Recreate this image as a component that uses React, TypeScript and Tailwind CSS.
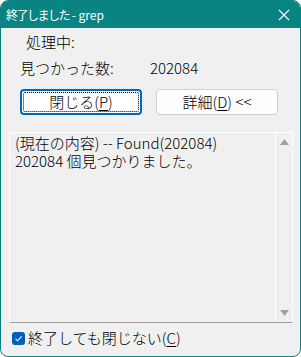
import React from "react";

const font = { fontFamily: '"Noto Sans CJK JP", "Noto Sans", sans-serif' };

export default function App() {
  return (
    <div className="w-[301px] h-[357px] bg-white">
      <div
        className="w-[301px] h-[357px] rounded-[8px] border border-[#0a8383] bg-[#f0f0f0] overflow-hidden flex flex-col text-black"
        style={font}
      >
        <div className="h-[27px] shrink-0 bg-[#0a8383] flex items-center justify-between pl-[5px] pr-[10px] text-white text-[12px] leading-none">
          <span className="whitespace-pre">
            <span className="tracking-[-1.5px]">終了しました</span>
            <span> - grep</span>
          </span>
          <svg width="12" height="12" viewBox="0 0 12 12" className="mt-[1px]">
            <path d="M1 1 L11 11 M11 1 L1 11" stroke="white" strokeWidth="1.1" />
          </svg>
        </div>
        <div className="flex-1 flex flex-col text-[15px] leading-[20px] font-light">
          <div className="mt-[4px] pl-[25px] h-[20px]">処理中:</div>
          <div className="mt-[6px] pl-[19px] h-[20px] flex">
            <span className="w-[130px]">見つかった数:</span>
            <span>202084</span>
          </div>
          <div className="mt-[11px] pl-[19px] flex gap-[14px]">
            <div className="relative w-[122px] h-[26px] rounded-[4px] border-2 border-[#0067c0] bg-white flex items-center justify-center">
              <div className="absolute inset-[1px] border border-dotted border-black rounded-[2px]" />
              <span>
                閉じる(<span className="underline underline-offset-2">P</span>)
              </span>
            </div>
            <div className="w-[122px] h-[26px] rounded-[4px] border border-[#d0d0d0] bg-[#fdfdfd] flex items-center justify-center">
              <span>
                詳細(<span className="underline underline-offset-2">D</span>) &lt;&lt;
              </span>
            </div>
          </div>
          <div className="mt-[17px] ml-[8px] mr-[7px] h-[191px] border border-white border-b-[#a0a0a0] flex">
            <div className="flex-1 pl-[5px] pt-[1px] leading-[18px]">
              <div>(現在の内容) -- Found(202084)</div>
              <div>202084 個見つかりました。</div>
            </div>
            <div className="w-[17px] border-l border-white flex flex-col items-center justify-between py-[6px]">
              <svg width="9" height="6" viewBox="0 0 9 6">
                <path d="M4.5 0 L9 6 L0 6 Z" fill="#a0a0a0" />
              </svg>
              <svg width="9" height="6" viewBox="0 0 9 6">
                <path d="M0 0 L9 0 L4.5 6 Z" fill="#a0a0a0" />
              </svg>
            </div>
          </div>
          <div className="mt-[5px] pl-[11px] h-[20px] flex items-center gap-[3px]">
            <div className="w-[13px] h-[13px] rounded-[3px] bg-[#005fb8] flex items-center justify-center">
              <svg width="9" height="9" viewBox="0 0 9 9">
                <path d="M1.5 4.8 L3.6 6.8 L7.6 2.4" stroke="white" strokeWidth="1.1" fill="none" />
              </svg>
            </div>
            <span>
              終了しても閉じない(<span className="underline underline-offset-2">C</span>)
            </span>
          </div>
        </div>
      </div>
    </div>
  );
}
